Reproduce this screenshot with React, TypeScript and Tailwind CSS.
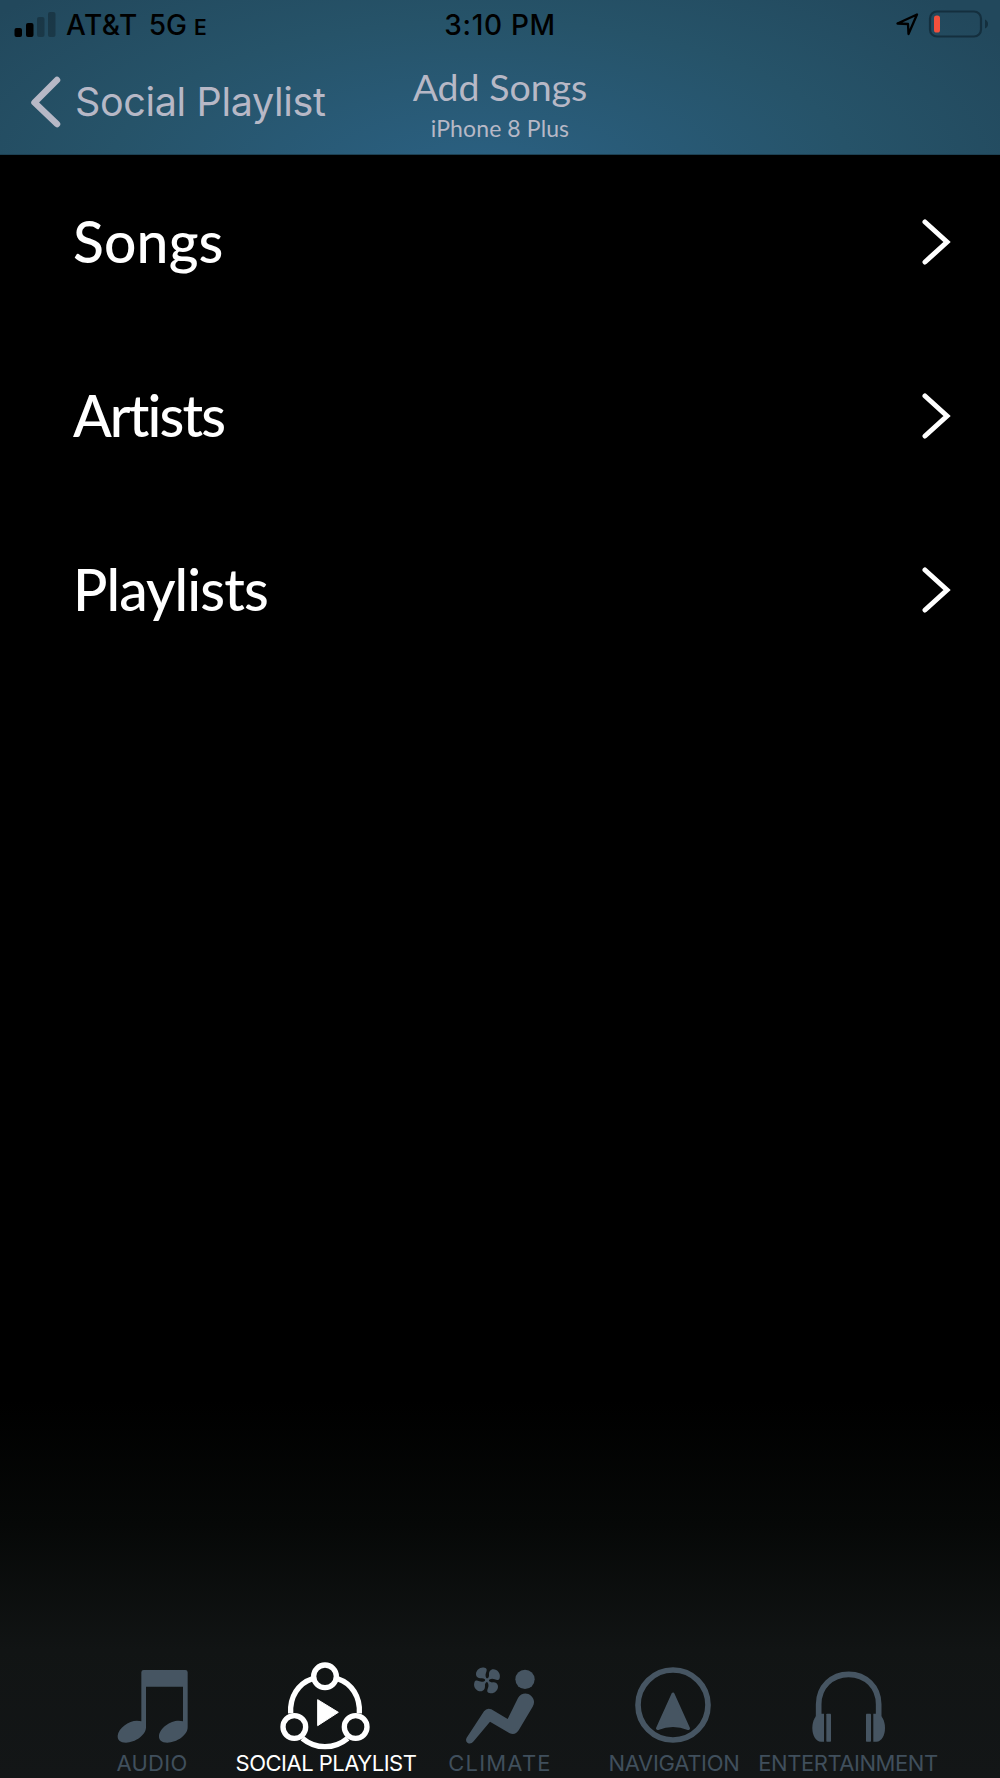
import type { ReactNode } from "react";

const MENU_ITEMS = [
  { label: "Songs", tracking: "tracking-[0.15px]" },
  { label: "Artists", tracking: "tracking-[-1.9px]" },
  { label: "Playlists", tracking: "tracking-[-0.9px]" },
];

function AudioIcon() {
  return (
    <svg viewBox="6 45 300 285" className="h-[95px] w-[100px]" fill="currentColor">
      <path d="M131 90H256Q263 90 263 97V262C263 286 230 308 202 308C184 308 176 299 177 287C179 265 210 242 236 242Q243 242 249 244V140H138V262C138 286 105 308 78 308C60 308 52 299 53 287C55 265 86 242 111 242Q118 242 124 244V97Q124 90 131 90Z" />
    </svg>
  );
}

function SocialIcon() {
  return (
    <svg viewBox="153 45 300 285" className="h-[95px] w-[100px]" fill="none" stroke="currentColor" strokeWidth="16">
      <path d="M262 116C220 130 194 170 197 220M338 116C380 130 406 170 403 220M232 295Q262 320 300 320T368 295" />
      <circle cx="300" cy="109" r="34" />
      <circle cx="208" cy="261" r="34" />
      <circle cx="392" cy="261" r="34" />
      <path d="M278 179L340 217L278 257Z" fill="currentColor" strokeWidth="3" strokeLinejoin="round" />
    </svg>
  );
}

const FAN_BLADE = "M175 121C166 113 165 106 168 98C171 91 172 85 164 83C151 79 138 90 138 102C138 111 145 115 153 115C161 114 165 117 169 124Z";

function ClimateIcon() {
  return (
    <svg viewBox="60 45 300 285" className="h-[95px] w-[100px]" fill="currentColor">
      <path d={FAN_BLADE} />
      <path d={FAN_BLADE} transform="rotate(90 171 121)" />
      <path d={FAN_BLADE} transform="rotate(180 171 121)" />
      <path d={FAN_BLADE} transform="rotate(270 171 121)" />
      <circle cx="171" cy="121" r="6" />
      <circle cx="285" cy="118" r="29" />
      <path d="M264 174C273 159 291 157 303 167C313 176 315 189 308 200L266 271Q256 287 239 280L180 245L131 304Q123 314 113 309Q105 302 110 293L162 214Q170 203 184 208L233 237Z" />
    </svg>
  );
}

function NavigationIcon() {
  return (
    <svg viewBox="102 45 300 285" className="h-[95px] w-[100px]" fill="none" stroke="currentColor">
      <circle cx="249" cy="195" r="105" strokeWidth="17" />
      <path d="M249 163L203 265Q249 247 295 265Z" fill="currentColor" strokeWidth="10" strokeLinejoin="round" />
    </svg>
  );
}

function EntertainmentIcon() {
  return (
    <svg viewBox="144 45 300 285" className="h-[95px] w-[100px]" fill="currentColor">
      <path d="M206 228V193C206 141 245 103 296 103S386 141 386 193V228" fill="none" stroke="currentColor" strokeWidth="17" />
      <path d="M222 221V305H213C197 305 187 286 187 264C187 242 197 221 213 221Z" />
      <path d="M370 221V305H379C395 305 405 286 405 264C405 242 395 221 379 221Z" />
      <rect x="229" y="221" width="14" height="84" rx="2" />
      <rect x="348" y="221" width="15" height="84" rx="2" />
    </svg>
  );
}

type Tab = { label: string; icon: ReactNode; tracking: string; active?: boolean };

const TABS: Tab[] = [
  { label: "AUDIO", icon: <AudioIcon />, tracking: "tracking-[0.3px]" },
  { label: "SOCIAL PLAYLIST", icon: <SocialIcon />, tracking: "tracking-[-0.5px]", active: true },
  { label: "CLIMATE", icon: <ClimateIcon />, tracking: "tracking-[1.2px]" },
  { label: "NAVIGATION", icon: <NavigationIcon />, tracking: "tracking-[-0.3px]" },
  { label: "ENTERTAINMENT", icon: <EntertainmentIcon />, tracking: "tracking-[-0.45px]" },
];

function StatusBar() {
  return (
    <div className="grid h-[45px] grid-cols-[1fr_auto_1fr] items-center text-[28px] leading-[45px] font-medium text-black">
      <div className="flex items-center pl-[14px]">
        <svg viewBox="0 0 42 26" className="mr-[10px] h-[26px] w-[42px]">
          <rect x="0.5" y="17" width="7.5" height="9" rx="2" />
          <rect x="12" y="12" width="7.5" height="14" rx="2" />
          <rect x="23" y="6" width="7.5" height="20" rx="2" opacity="0.25" />
          <rect x="34" y="1" width="7.5" height="25" rx="2" opacity="0.25" />
        </svg>
        <div className="flex items-baseline pt-[3px]">
          <span className="tracking-[0.5px]">AT&amp;T</span>
          <span className="ml-[11px]">5G</span>
          <span className="ml-[7px] text-[21px] leading-none font-semibold">E</span>
        </div>
      </div>
      <span className="pt-[3px] tracking-[0.7px]">3:10 PM</span>
      <div className="flex items-center justify-end gap-[9px] pr-3">
        <svg viewBox="0 0 24 24" className="h-6 w-6" fill="none" stroke="currentColor" strokeWidth="2.3" strokeLinejoin="round">
          <path d="M22 2.5L2.5 11.5L13 12L13.5 22Z" />
        </svg>
        <svg viewBox="0 0 60 28" className="h-7 w-[60px]">
          <rect x="2" y="1.5" width="51" height="25" rx="7" fill="none" stroke="#142f3e" strokeWidth="2.2" />
          <path d="M57 9.5Q60 11 60 14T57 18.5Z" fill="#142f3e" />
          <rect x="6" y="5.5" width="6" height="17" rx="2.6" fill="#f4503c" />
        </svg>
      </div>
    </div>
  );
}

function Header() {
  return (
    <header className="h-[155px] border-b border-[#1d4052] bg-[radial-gradient(ellipse_620px_260px_at_48%_115%,#2b6183_0%,#265369_60%,#22485c_100%)]">
      <StatusBar />
      <div className="grid h-[109px] grid-cols-[1fr_auto_1fr] text-[#b7b8c6]">
        <button className="flex h-[114px] items-center pl-[30px] text-left">
          <svg viewBox="0 0 32 52" className="h-[52px] w-8" fill="none" stroke="currentColor" strokeWidth="6.5" strokeLinecap="round" strokeLinejoin="round">
            <path d="M27 4L4.5 26.5L27 48" />
          </svg>
          <span className="ml-[13px] pt-[2px] text-[39.5px] leading-none font-normal tracking-[-0.35px] whitespace-nowrap">Social Playlist</span>
        </button>
        <div className="flex flex-col items-center pt-5 font-[Lato,sans-serif]">
          <h1 className="text-[37.5px] leading-[44px]">Add Songs</h1>
          <p className="text-[23px] leading-[39px] tracking-[0.1px]">iPhone 8 Plus</p>
        </div>
      </div>
    </header>
  );
}

export default function App() {
  return (
    <div className="flex h-[1778px] w-[1000px] flex-col overflow-hidden bg-black bg-[linear-gradient(to_bottom,#000_0px,#000_1400px,#060807_1525px,#111414_1650px,#131617_1778px)] font-[Inter,sans-serif]">
      <Header />
      <main className="flex-1">
        {MENU_ITEMS.map(({ label, tracking }) => (
          <button
            key={label}
            className="flex h-[174px] w-full items-center justify-between pr-[49px] pl-[73px] font-[Lato,sans-serif] text-[57px] leading-none font-medium text-white"
          >
            <span className={`pb-[2px] ${tracking}`}>{label}</span>
            <svg viewBox="0 0 30 46" className="h-[46px] w-[30px]" fill="none" stroke="currentColor" strokeWidth="5" strokeLinecap="round">
              <path d="M4 3L26 23L4 43" />
            </svg>
          </button>
        ))}
      </main>
      <nav className="grid h-[123px] grid-cols-[repeat(5,174px)] justify-center">
        {TABS.map(({ label, icon, tracking, active }) => (
          <button
            key={label}
            className={`flex flex-col items-center ${active ? "text-white" : "text-[#465562]"}`}
          >
            {icon}
            <span className={`text-[22px] leading-[26px] whitespace-nowrap ${tracking} ${active ? "" : "text-[#404f5c]"}`}>
              {label}
            </span>
          </button>
        ))}
      </nav>
    </div>
  );
}
